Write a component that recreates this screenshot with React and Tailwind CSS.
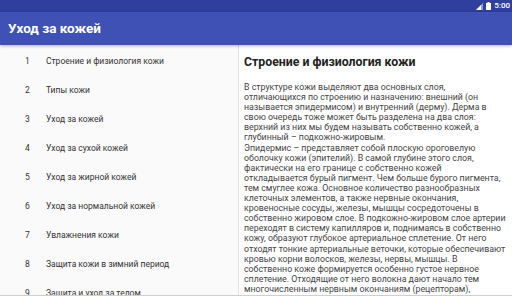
import React from "react";

const topics = [
  "Строение и физиология кожи",
  "Типы кожи",
  "Уход за кожей",
  "Уход за сухой кожей",
  "Уход за жирной кожей",
  "Уход за нормальной кожей",
  "Увлажнения кожи",
  "Защита кожи в зимний период",
  "Защита и уход за телом",
];

const lines = [
  "В структуре кожи выделяют два основных слоя,",
  "отличающихся по строению и назначению: внешний (он",
  "называется эпидермисом) и внутренний (дерму). Дерма в",
  "свою очередь тоже может быть разделена на два слоя:",
  "верхний из них мы будем называть собственно кожей, а",
  "глубинный – подкожно-жировым.",
  "Эпидермис – представляет собой плоскую ороговелую",
  "оболочку кожи (эпителий). В самой глубине этого слоя,",
  "фактически на его границе с собственно кожей",
  "откладывается бурый пигмент. Чем больше бурого пигмента,",
  "тем смуглее кожа. Основное количество разнообразных",
  "клеточных элементов, а также нервные окончания,",
  "кровеносные сосуды, железы, мышцы сосредоточены в",
  "собственно жировом слое. В подкожно-жировом слое артерии",
  "переходят в систему капилляров и, поднимаясь в собственно",
  "кожу, образуют глубокое артериальное сплетение. От него",
  "отходят тонкие артериальные веточки, которые обеспечивают",
  "кровью корни волосков, железы, нервы, мышцы. В",
  "собственно коже формируется особенно густое нервное",
  "сплетение. Отходящие от него волокна дают начало тем",
  "многочисленным нервным окончаниям (рецепторам),",
];

function StatusBar() {
  return (
    <div className="h-[12px] bg-[#303f9f] flex items-center justify-end pr-[2px] gap-[3px] text-white">
      <svg width="7" height="7" viewBox="0 0 7 7">
        <path d="M7 0 L7 7 L0 7 Z" fill="#fff" fillOpacity="0.5" />
        <path d="M5 2 L5 7 L0 7 Z" fill="#fff" />
      </svg>
      <svg width="5" height="8" viewBox="0 0 5 8">
        <rect x="1.5" y="0" width="2" height="1" fill="#fff" />
        <rect x="0" y="1" width="5" height="7" fill="#fff" />
      </svg>
      <span className="text-[8px] leading-none font-medium">5:00</span>
    </div>
  );
}

export default function App() {
  return (
    <div className="w-[512px] h-[296px] overflow-hidden flex flex-col bg-white" style={{ fontFamily: "Roboto, 'Noto Sans', sans-serif" }}>
      <StatusBar />
      <div className="h-[33px] bg-[#3f51b5] flex items-center pl-[8px] shadow-[0_1px_3px_rgba(0,0,0,0.3)] relative z-10">
        <span className="text-white text-[13.5px] font-bold">Уход за кожей</span>
      </div>

      <div className="flex flex-1 min-h-0 border-b border-[#cfcfcf]">
        {/* Topic list */}
        <div className="w-[239px] bg-[#fafafa] border-r border-[#e0e0e0] pt-[2px] overflow-hidden">
          {topics.map((t, i) => (
            <div key={i} className="h-[29px] shrink-0 flex items-center text-[8.5px] text-[#333]">
              <span className="w-[46px] pl-[25px]">{i + 1}</span>
              <span>{t}</span>
            </div>
          ))}
        </div>

        {/* Article */}
        <div className="flex-1 px-[5px] pt-[9.5px] overflow-hidden">
          <h1 className="text-[12.3px] font-bold text-[#222] leading-[15px]">Строение и физиология кожи</h1>
          <div className="mt-[12.5px] text-[8.8px] leading-[10.1px] text-[#444]">
            {lines.map((l, i) => (
              <div key={i} className="whitespace-nowrap">{l}</div>
            ))}
          </div>
        </div>
      </div>
    </div>
  );
}
